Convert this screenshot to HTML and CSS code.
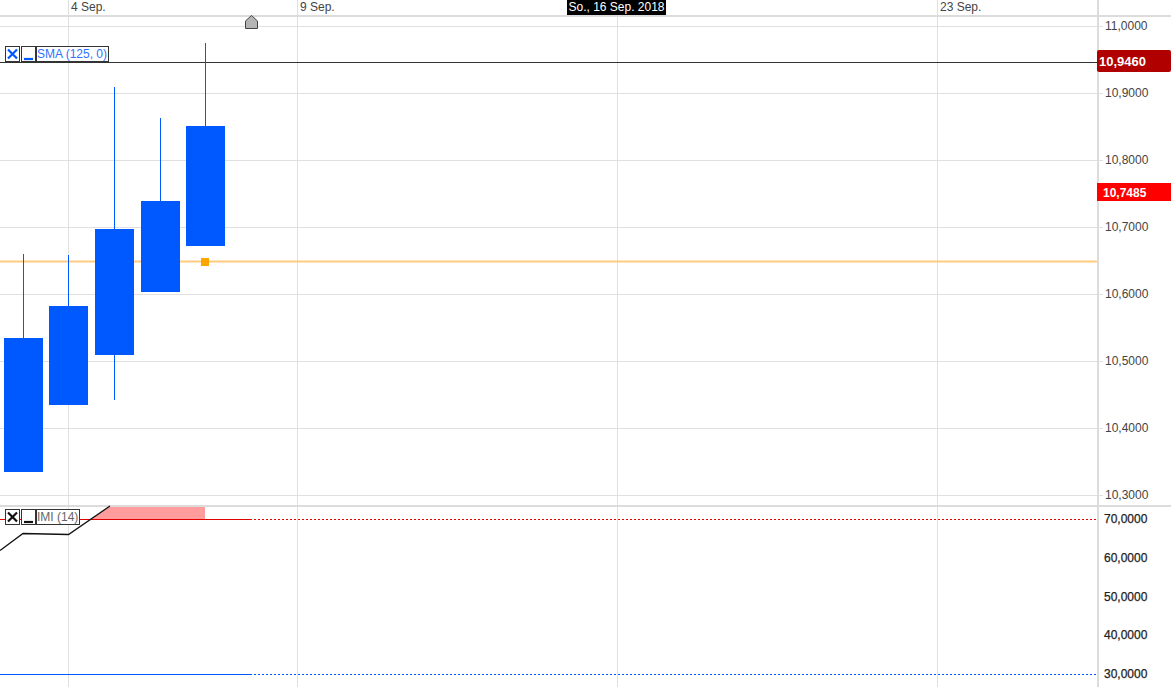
FILE: index.html
```html
<!DOCTYPE html>
<html lang="de">
<head>
<meta charset="utf-8">
<title>Chart</title>
<link rel="stylesheet" href="styles.css">
</head>
<body>
<main class="chart">
  <svg class="plot" width="1171" height="687" viewBox="0 0 1171 687" xmlns="http://www.w3.org/2000/svg">
    <!-- vertical grid -->
    <g class="grid">
      <path d="M68.5 0V687M297.5 0V687M617.5 0V687M937.5 0V687"/>
      <path d="M0 26.5H1097M0 93.5H1097M0 160.5H1097M0 227.5H1097M0 294.5H1097M0 361.5H1097M0 428.5H1097M0 495.5H1097"/>
      <path d="M1098 26.5H1103M1098 93.5H1103M1098 160.5H1103M1098 227.5H1103M1098 294.5H1103M1098 361.5H1103M1098 428.5H1103M1098 495.5H1103"/>
    </g>
    <g class="frame">
      <path d="M0 16H1171M0 506H1171M1098 0V687"/>
    </g>

    <!-- time axis -->
    <g class="time-labels">
      <text x="71" y="11">4 Sep.</text>
      <text x="300" y="11">9 Sep.</text>
      <text x="940" y="11">23 Sep.</text>
    </g>

    <!-- price pane -->
    <path class="last-line" d="M0 62.5H1097"/>
    <path class="sma-line" d="M0 261.5H1097"/>
    <g class="wicks">
      <path d="M23.5 254V338M68.5 255V306M114.5 87V229M114.5 355V400M160.5 118V201M205.5 43V126"/>
    </g>
    <g class="bodies">
      <rect x="4" y="338" width="39" height="134"/>
      <rect x="49" y="306" width="39" height="99"/>
      <rect x="95" y="229" width="39" height="126"/>
      <rect x="141" y="201" width="39" height="91"/>
      <rect x="186" y="126" width="39" height="120"/>
    </g>
    <rect class="marker" x="201" y="258" width="8" height="8"/>
    <path class="home" d="M245.5 28.5V21L251.5 15.5L257.5 21V28.5Z"/>

    <!-- price labels -->
    <g class="price-labels">
      <text x="1105" y="30">11,0000</text>
      <text x="1105" y="97">10,9000</text>
      <text x="1105" y="164">10,8000</text>
      <text x="1105" y="231">10,7000</text>
      <text x="1105" y="298">10,6000</text>
      <text x="1105" y="365">10,5000</text>
      <text x="1105" y="432">10,4000</text>
      <text x="1105" y="499">10,3000</text>
    </g>
    <rect class="tag-dark" x="1097" y="50" width="74" height="22" rx="2"/>
    <rect class="tag-red" x="1097" y="183" width="74" height="18"/>
    <text class="tag-text tag-large" x="1099" y="66">10,9460</text>
    <text class="tag-text" x="1103" y="197">10,7485</text>

    <!-- oscillator pane -->
    <path class="zone" d="M109 507H205V519H92Z"/>
    <path class="level-red" d="M0 519.5H252"/>
    <path class="level-red dotted" d="M254 519.5H1097"/>
    <path class="level-blue" d="M0 674.5H252"/>
    <path class="level-blue dotted" d="M254 674.5H1097"/>
    <path class="osc-line" d="M0 550.5L23 533.5L68.5 534.5L110 506"/>
    <g class="osc-labels">
      <text x="1104" y="523">70,0000</text>
      <text x="1104" y="562">60,0000</text>
      <text x="1104" y="601">50,0000</text>
      <text x="1104" y="639">40,0000</text>
      <text x="1104" y="678">30,0000</text>
    </g>
  </svg>

  <div class="legend legend-sma">
    <span class="legend-btn"><svg width="13" height="14" viewBox="0 0 13 14"><path d="M2 2.5L11 11.5M11 2.5L2 11.5"/></svg></span>
    <span class="legend-btn"><svg width="13" height="14" viewBox="0 0 13 14"><path d="M2 12H11"/></svg></span>
    <span class="legend-name">SMA (125, 0)</span>
  </div>
  <div class="legend legend-imi">
    <span class="legend-btn"><svg width="13" height="14" viewBox="0 0 13 14"><path d="M2 2.5L11 11.5M11 2.5L2 11.5"/></svg></span>
    <span class="legend-btn"><svg width="13" height="14" viewBox="0 0 13 14"><path d="M2 12H11"/></svg></span>
    <span class="legend-name">IMI (14)</span>
  </div>
  <div class="crosshair-date">So., 16 Sep. 2018</div>
</main>
</body>
</html>
```

FILE: styles.css
```css
* { box-sizing: border-box; }
html, body { margin: 0; padding: 0; background: #fff; }
.chart {
  position: relative;
  width: 1171px;
  height: 692px;
  overflow: hidden;
  font-family: "Liberation Sans", Arial, sans-serif;
  background: #fff;
}
.plot { display: block; }
.plot text { font-family: "Liberation Sans", Arial, sans-serif; font-size: 12px; }
.grid path { fill: none; stroke: #e0e0e0; stroke-width: 1; }
.frame path { fill: none; stroke: #dcdcdc; stroke-width: 2; }
.time-labels text { fill: #444; }
.price-labels text { fill: #444; }
.osc-labels text { fill: #222; stroke: #222; stroke-width: 0.25px; }
.last-line { fill: none; stroke: #333; stroke-width: 1; }
.sma-line { fill: none; stroke: #ffcc80; stroke-width: 2; }
.wicks path { fill: none; stroke: #0058ff; stroke-width: 1; }
.bodies rect { fill: #0058ff; }
.marker { fill: #ffa500; }
.home { fill: #b4b4b4; stroke: #444; stroke-width: 1; }
.tag-dark { fill: #b00000; }
.tag-red { fill: #ff0000; }
.plot .tag-text { fill: #fff; font-weight: 700; font-size: 12px; }
.plot .tag-large { font-size: 13px; }
.zone { fill: #ff9c9c; }
.level-red { fill: none; stroke: #e00000; stroke-width: 1; }
.level-blue { fill: none; stroke: #0058ff; stroke-width: 1; }
.dotted { stroke-dasharray: 2 2; }
.osc-line { fill: none; stroke: #111; stroke-width: 1.3; }

.legend {
  position: absolute;
  left: 5px;
  display: flex;
  gap: 1px;
  height: 16px;
  font-size: 12px;
  line-height: 14px;
}
.legend-sma { top: 46px; color: #2f72ff; }
.legend-imi { top: 509px; color: #666; }
.legend-btn {
  width: 15px;
  height: 16px;
  border: 1px solid #333;
  background: #fff;
  display: flex;
  align-items: center;
  justify-content: center;
}
.legend-btn svg { display: block; flex: none; }
.legend-btn path { fill: none; stroke-width: 2.2; }
.legend-sma .legend-btn path { stroke: #0058ff; }
.legend-imi .legend-btn path { stroke: #111; }
.legend-name {
  margin-left: -1px;
  padding: 0 1px 0 0;
  border: 1px solid #333;
  background: #fff;
  white-space: nowrap;
}
.crosshair-date {
  position: absolute;
  left: 567px;
  top: 0;
  width: 99px;
  height: 15px;
  background: #000;
  color: #fff;
  font-size: 12px;
  line-height: 14px;
  text-align: center;
  white-space: nowrap;
}
```
